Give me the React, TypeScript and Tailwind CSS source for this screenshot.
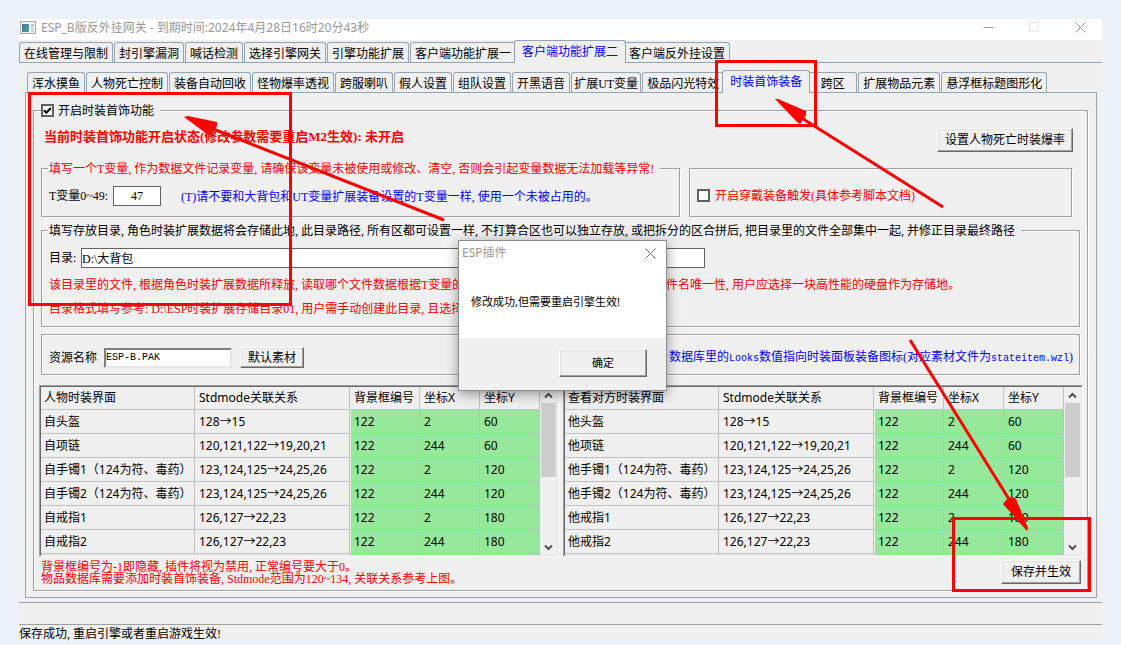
import type { ReactNode } from 'react';

interface TabItem {
  label: string;
  className?: string;
}

interface Row {
  name: string;
  relation: string;
  x: number;
  y: number;
}

const MAIN_TABS: TabItem[] = [
  { label: '在线管理与限制' },
  { label: '封引擎漏洞' },
  { label: '喊话检测' },
  { label: '选择引擎网关' },
  { label: '引擎功能扩展' },
  { label: '客户端功能扩展一' },
  { label: '客户端功能扩展二' },
  { label: '客户端反外挂设置' },
];

const SUB_TABS: TabItem[] = [
  { label: '浑水摸鱼' },
  { label: '人物死亡控制' },
  { label: '装备自动回收' },
  { label: '怪物爆率透视' },
  { label: '跨服喇叭' },
  { label: '假人设置' },
  { label: '组队设置' },
  { label: '开黑语音' },
  { label: '扩展UT变量', className: 'w-[70px]' },
  { label: '极品闪光特效' },
  { label: '时装首饰装备' },
  { label: '跨区', className: 'w-[49px]' },
  { label: '扩展物品元素' },
  { label: '悬浮框标题图形化' },
];

const SLOTS: Row[] = [
  { name: '头盔', relation: '128→15', x: 2, y: 60 },
  { name: '项链', relation: '120,121,122→19,20,21', x: 244, y: 60 },
  { name: '手镯1（124为符、毒药）', relation: '123,124,125→24,25,26', x: 2, y: 120 },
  { name: '手镯2（124为符、毒药）', relation: '123,124,125→24,25,26', x: 244, y: 120 },
  { name: '戒指1', relation: '126,127→22,23', x: 2, y: 180 },
  { name: '戒指2', relation: '126,127→22,23', x: 244, y: 180 },
];

const SONG = 'font-["Liberation_Serif","Noto_Sans_CJK_SC",serif]';
const YAHEI = 'font-["Noto_Sans","Noto_Sans_CJK_SC",sans-serif]';
const MONO = 'font-["Liberation_Mono","Noto_Sans_CJK_SC",monospace] text-[10px]';

const ETCHED = 'min-w-0 border border-[#a0a0a0] shadow-[1px_1px_0_#fff,inset_1px_1px_0_#fff]';
const RAISED =
  'border border-t-white border-l-white border-r-[#696969] border-b-[#696969] bg-[#f0f0f0] shadow-[inset_-1px_-1px_0_#a0a0a0,inset_1px_1px_0_#e3e3e3] text-center whitespace-nowrap';

function Tabs({ items, active, className = '' }: { items: TabItem[]; active: string; className?: string }) {
  return (
    <div role="tablist" className={`flex h-[23px] items-end gap-px border-b border-[#8fa6b5] ${className}`}>
      {items.map((t) => {
        const on = t.label === active;
        return (
          <button
            key={t.label}
            type="button"
            role="tab"
            aria-selected={on}
            className={`flex flex-none justify-center rounded-t-[3px] border border-b-0 border-[#8fa6b5] bg-[#f0f0f0] whitespace-nowrap ${
              on ? 'z-10 -mx-[3px] -mb-px h-[23px] px-[7px] leading-[23px] text-[#0000ff]' : 'h-5 px-1 leading-[22px]'
            } ${t.className || ''}`}
          >
            {t.label}
          </button>
        );
      })}
    </div>
  );
}

function Legend({ children, className = '' }: { children: ReactNode; className?: string }) {
  return (
    <legend className={`ml-[6px] h-4 bg-[#f0f0f0] pr-[6px] pl-px leading-[18px] whitespace-nowrap ${className}`}>
      {children}
    </legend>
  );
}

function CheckBox({ id, checked = false }: { id: string; checked?: boolean }) {
  return (
    <span className="relative block h-[13px] w-[13px] flex-none">
      <input
        id={id}
        type="checkbox"
        defaultChecked={checked}
        className="peer block h-[13px] w-[13px] appearance-none border-2 border-[#606060] bg-white"
      />
      <svg viewBox="0 0 13 13" className="pointer-events-none absolute inset-0 hidden peer-checked:block">
        <path d="M3 6.2 L5.3 8.7 L9.8 4" fill="none" stroke="#000" strokeWidth="2" />
      </svg>
    </span>
  );
}

function Chevron({ up = false }: { up?: boolean }) {
  return (
    <svg width="9" height="7" viewBox="0 0 9 7" className="flex-none">
      <path d={up ? 'M1 5.5 L4.5 2 L8 5.5' : 'M1 1.5 L4.5 5 L8 1.5'} fill="none" stroke="#505050" strokeWidth="2" />
    </svg>
  );
}

function SlotTable({ title, prefix }: { title: string; prefix: string }) {
  const first = 'border-r border-b border-[#c0c0c0] pl-[3px]';
  const cell = 'border-r border-b border-[#c0c0c0] pl-1';
  const green = 'border-r border-b border-[#c0c0c0] bg-[#96e99a] pl-1';
  const greenEdge = 'border-r border-b border-l border-[#c0c0c0] border-l-[#f0f0f0] bg-[#96e99a] pl-[3px]';
  return (
    <div className="h-[172px] min-w-0 flex-1 border border-t-[#a0a0a0] border-r-white border-b-white border-l-[#a0a0a0]">
      <div className="flex h-full overflow-hidden border border-t-[#696969] border-r-[#e3e3e3] border-b-[#e3e3e3] border-l-[#696969]">
        <div className="min-w-0 flex-1 overflow-hidden">
          <table className={`w-full table-fixed border-separate border-spacing-0 text-left text-[12px] whitespace-nowrap ${YAHEI}`}>
            <colgroup>
              <col />
              <col className="w-[155px]" />
              <col className="w-[70px]" />
              <col className="w-[60px]" />
              <col className="w-[60px]" />
            </colgroup>
            <thead>
              <tr className="h-[23px] leading-[22px]">
                <th className={`${first} font-normal`}>{title}</th>
                <th className={`${cell} font-normal`}>Stdmode关联关系</th>
                <th className={`${cell} font-normal`}>背景框编号</th>
                <th className={`${cell} font-normal`}>坐标X</th>
                <th className={`${cell} font-normal`}>坐标Y</th>
              </tr>
            </thead>
            <tbody>
              {SLOTS.map((s) => (
                <tr key={s.name} className="h-6 leading-[23px]">
                  <td className={first}>{prefix + s.name}</td>
                  <td className={cell}>{s.relation}</td>
                  <td className={greenEdge}>122</td>
                  <td className={green}>{s.x}</td>
                  <td className={green}>{s.y}</td>
                </tr>
              ))}
              <tr className="h-6">
                <td className={first} />
                <td className={cell} />
                <td className={greenEdge} />
                <td className={green} />
                <td className={green} />
              </tr>
            </tbody>
          </table>
        </div>
        <div className="flex w-[17px] flex-none flex-col items-center justify-between bg-[#f0f0f0] pt-[5px] pb-1">
          <div className="flex flex-col items-center gap-1">
            <Chevron up />
            <div className="h-[74px] w-[15px] bg-[#cdcdcd]" />
          </div>
          <Chevron />
        </div>
      </div>
    </div>
  );
}

function MessageBox() {
  return (
    <div
      role="dialog"
      aria-label="ESP插件"
      className={`absolute top-[240px] left-[458px] z-20 flex h-[151px] w-[209px] flex-col border border-[#8c8c8c] bg-white shadow-[0_3px_12px_rgba(0,0,0,0.4)] ${YAHEI}`}
    >
      <div className="flex h-6 items-center justify-between pr-[10px] pl-[3px] text-[12px] text-[#999]">
        <span>ESP插件</span>
        <button type="button" aria-label="关闭">
          <svg width="11" height="11" viewBox="0 0 11 11">
            <path d="M0.5 0.5 L10.5 10.5 M10.5 0.5 L0.5 10.5" stroke="#808080" />
          </svg>
        </button>
      </div>
      <p className="flex-1 pt-[27px] pl-3 text-[11px] leading-5 whitespace-nowrap">修改成功,但需要重启引擎生效!</p>
      <div className="flex h-[52px] justify-end bg-[#f0f0f0] pt-[11px] pr-[19px]">
        <button type="button" className={`h-7 w-[88px] text-[11px] ${RAISED}`}>
          确定
        </button>
      </div>
    </div>
  );
}

function Marks() {
  return (
    <svg width="1121" height="645" viewBox="0 0 1121 645" className="pointer-events-none absolute top-0 left-0 z-30">
      <g fill="none" stroke="#ff0000" strokeWidth="3">
        <rect x="29.5" y="93.5" width="261" height="211" />
        <rect x="716.5" y="61.5" width="99" height="64" />
        <rect x="953.5" y="518.5" width="136" height="72" />
        <path d="M444 220 L208 127" />
        <path d="M943 207 L800 117" />
        <path d="M910 340 L1012 504" />
      </g>
      <g fill="#ff0000">
        <path d="M184 117 L188 116 L217 122 L217 126 L211 136 L207 134 Z" />
        <path d="M775 99 L778 99 L806 111 L806 115 L800 124 L797 122 Z" />
        <path d="M1027 531 L1003 504 L1008 498 L1013 497 L1016 499 L1028 528 Z" />
      </g>
    </svg>
  );
}

export default function App() {
  return (
    <div className={`relative min-h-screen overflow-hidden bg-[#edf2fa] px-[19px] pt-[19px] pb-[5px] text-[12px] text-black ${SONG}`}>
      <div className="bg-[#f0f0f0]">
        {/* Title bar */}
        <header className={`flex h-[21px] items-center bg-white pb-1 text-[#999] ${YAHEI}`}>
          <svg width="16" height="13" viewBox="0 0 16 13" className="ml-px flex-none">
            <defs>
              <linearGradient id="screen" x1="0" y1="0" x2="1" y2="1">
                <stop offset="0" stopColor="#3a6ea8" />
                <stop offset="1" stopColor="#5aa886" />
              </linearGradient>
            </defs>
            <rect x="0.5" y="0.5" width="15" height="12" fill="#f4f4f4" stroke="#a8a8a8" />
            <rect x="2" y="3" width="7" height="8" fill="url(#screen)" />
            <rect x="11" y="3" width="3" height="3" fill="#bcc8cc" />
            <rect x="11" y="7" width="3" height="4" fill="#d0d6d8" />
          </svg>
          <h1 className="ml-[5px] text-[12px] leading-4 whitespace-nowrap">
            ESP_B版反外挂网关 - 到期时间:2024年4月28日16时20分43秒
          </h1>
          <div className="mr-4 ml-auto flex gap-[35px]">
            <button type="button" aria-label="最小化">
              <svg width="11" height="11" viewBox="0 0 11 11">
                <path d="M0.5 5.5 H10.5" stroke="#999" />
              </svg>
            </button>
            <button type="button" aria-label="最大化">
              <svg width="11" height="11" viewBox="0 0 11 11">
                <rect x="0.5" y="0.5" width="9" height="9" fill="none" stroke="#e6e6e6" />
              </svg>
            </button>
            <button type="button" aria-label="关闭">
              <svg width="11" height="11" viewBox="0 0 11 11">
                <path d="M0.5 0.5 L10.5 10.5 M10.5 0.5 L0.5 10.5" stroke="#999" />
              </svg>
            </button>
          </div>
        </header>

        <Tabs items={MAIN_TABS} active="客户端功能扩展二" />

        <main className="border-b border-[#8fa6b5] pt-[7px] pr-[5px] pb-1 pl-[6px]">
          <Tabs items={SUB_TABS} active="时装首饰装备" className="pl-[2px]" />

          <div className="border-x border-b border-[#8fa6b5] pt-[9px] pr-2 pb-[6px] pl-[7px]">
            <fieldset className={`px-[7px] pb-[5px] ${ETCHED}`}>
              <legend className="flex h-4 items-center gap-1 bg-[#f0f0f0] pr-[6px] whitespace-nowrap">
                <CheckBox id="enable" checked />
                <label htmlFor="enable" className="pt-[2px]">
                  开启时装首饰功能
                </label>
              </legend>

              <div className="flex items-start justify-between pt-[10px] pr-[7px]">
                <p className="pl-[3px] text-[13px] leading-[18px] font-bold whitespace-nowrap text-[#ff0000]">
                  当前时装首饰功能开启状态(修改参数需要重启M2生效): 未开启
                </p>
                <button type="button" className={`h-6 w-[136px] ${RAISED}`}>
                  设置人物死亡时装爆率
                </button>
              </div>

              <div className="mt-2 flex gap-[9px] pr-2">
                <fieldset className={`flex-1 pb-[10px] ${ETCHED}`}>
                  <Legend className="text-[#ff0000]">
                    填写一个T变量, 作为数据文件记录变量, 请确保该变量未被使用或修改、清空, 否则会引起变量数据无法加载等异常!
                  </Legend>
                  <div className="flex items-center pt-[10px] pl-[7px] leading-4 whitespace-nowrap">
                    <label htmlFor="tvar" className="w-16">
                      T变量0~49:
                    </label>
                    <input
                      id="tvar"
                      type="text"
                      defaultValue="47"
                      className="h-5 w-12 border border-[#646464] bg-white text-center"
                    />
                    <span className="ml-5 pt-[2px] text-[#0000ff]">
                      (T)请不要和大背包和UT变量扩展装备设置的T变量一样, 使用一个未被占用的。
                    </span>
                  </div>
                </fieldset>
                <fieldset className={`mt-2 flex w-[383px] flex-none items-center ${ETCHED}`}>
                  <div className="flex items-center gap-[5px] pt-[6px] pl-[7px] leading-4 whitespace-nowrap text-[#ff0000]">
                    <CheckBox id="trigger" />
                    <label htmlFor="trigger">开启穿戴装备触发(具体参考脚本文档)</label>
                  </div>
                </fieldset>
              </div>

              <fieldset className={`mt-[5px] pb-[5px] ${ETCHED}`}>
                <Legend>
                  填写存放目录, 角色时装扩展数据将会存储此地, 此目录路径, 所有区都可设置一样, 不打算合区也可以独立存放, 或把拆分的区合拼后, 把目录里的文件全部集中一起, 并修正目录最终路径
                </Legend>
                <div className="flex items-center pt-[10px] pl-[7px] leading-4">
                  <label htmlFor="dir" className="w-8">
                    目录:
                  </label>
                  <input
                    id="dir"
                    type="text"
                    defaultValue="D:\大背包"
                    className="h-5 w-[624px] border border-[#646464] bg-white"
                  />
                </div>
                <div className="mt-[5px] pl-[7px] leading-6 whitespace-nowrap text-[#ff0000]">
                  <p className="flex">
                    <span className="w-[617px]">该目录里的文件, 根据角色时装扩展数据所释放, 读取哪个文件数据根据T变量的</span>
                    <span>件名唯一性, 用户应选择一块高性能的硬盘作为存储地。</span>
                  </p>
                  <p>目录格式填写参考: D:\ESP时装扩展存储目录01, 用户需手动创建此目录, 且选择</p>
                </div>
              </fieldset>

              <fieldset
                className={`mt-[7px] flex items-center justify-between pt-3 pr-[6px] pb-[6px] pl-[7px] leading-4 whitespace-nowrap ${ETCHED}`}
              >
                <div className="flex items-center">
                  <label htmlFor="pak" className="w-[55px]">
                    资源名称
                  </label>
                  <input
                    id="pak"
                    type="text"
                    defaultValue="ESP-B.PAK"
                    className={`h-5 w-32 border-2 border-t-[#808080] border-r-[#e6e6e6] border-b-[#e6e6e6] border-l-[#808080] bg-white ${MONO}`}
                  />
                  <button type="button" className={`ml-2 h-[21px] w-16 ${RAISED}`}>
                    默认素材
                  </button>
                </div>
                <p className="text-[#0000ff]">
                  数据库里的<span className={MONO}>Looks</span>数值指向时装面板装备图标(对应素材文件为
                  <span className={MONO}>stateitem.wzl</span>)
                </p>
              </fieldset>

              <div className="mt-[10px] -mr-[3px] -ml-[2px] flex gap-1">
                <SlotTable title="人物时装界面" prefix="自" />
                <SlotTable title="查看对方时装界面" prefix="他" />
              </div>

              <div className="mt-[3px] -mr-[1px] flex items-start justify-between">
                <div className="pt-px leading-3 whitespace-nowrap text-[#ff0000]">
                  <p>背景框编号为-1即隐藏, 插件将视为禁用, 正常编号要大于0。</p>
                  <p>物品数据库需要添加时装首饰装备, Stdmode范围为120~134, 关联关系参考上图。</p>
                </div>
                <button type="button" className={`h-6 w-20 ${RAISED}`}>
                  保存并生效
                </button>
              </div>
            </fieldset>
          </div>
        </main>

        <div className="h-[22px] border-b border-[#a0a0a0]" />
        <footer className="h-[15px] leading-[18px]">保存成功, 重启引擎或者重启游戏生效!</footer>
      </div>

      <MessageBox />
      <Marks />
    </div>
  );
}
